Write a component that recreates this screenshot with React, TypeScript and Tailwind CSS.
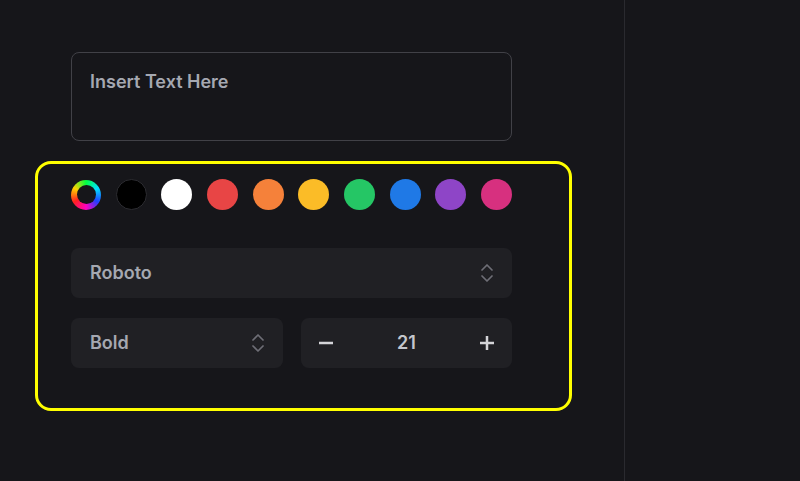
import { ChevronsUpDown } from "lucide-react";

const swatches = [
  "bg-black border border-[#2c2c31]",
  "bg-white",
  "bg-[#e84545]",
  "bg-[#f5813a]",
  "bg-[#fbbc27]",
  "bg-[#25c665]",
  "bg-[#1f79e6]",
  "bg-[#8e45c7]",
  "bg-[#d7307f]",
];

export default function App() {
  return (
    <div className="flex h-[481px] w-[800px] overflow-hidden bg-[#16161a] font-['Inter',sans-serif]">
      {/* editor panel */}
      <div className="w-[625px] shrink-0 border-r border-[#2a2a2f] pl-[71px] pt-[52px]">
        <div className="h-[89px] w-[441px] rounded-lg border border-[#414147] px-[18px] pt-[16px] text-lg leading-[26px] font-semibold text-[#a5a8b1]">
          Insert Text Here
        </div>

        <div className="-ml-[36px] mt-[20px] w-[537px] rounded-[16px] border-[3px] border-[#ffff00] pb-[40px] pl-[33px] pt-[15px]">
          {/* colours */}
          <div className="flex w-[441px] items-center justify-between">
            <div className="flex h-[30px] w-[30px] items-center justify-center rounded-full bg-[conic-gradient(#00ff40,#00e0ff,#2040ff,#ff00c0,#ff2020,#ffd000,#00ff40)]">
              <div className="h-[19px] w-[19px] rounded-full bg-[#16161a]" />
            </div>
            {swatches.map((c) => (
              <div key={c} className={`h-[31px] w-[31px] rounded-full ${c}`} />
            ))}
          </div>

          {/* font family */}
          <div className="mt-[38px] flex h-[50px] w-[441px] items-center justify-between rounded-lg bg-[#202024] pl-[19px] pr-[13px] text-lg font-semibold text-[#a5a8b1]">
            <span>Roboto</span>
            <ChevronsUpDown className="h-6 w-6 text-[#6e6e76]" strokeWidth={1.75} />
          </div>

          {/* weight + size */}
          <div className="mt-[20px] flex w-[441px] gap-[18px]">
            <div className="flex h-[50px] w-[212px] items-center justify-between rounded-lg bg-[#202024] pl-[19px] pr-[13px] text-lg font-semibold text-[#a5a8b1]">
              <span>Bold</span>
              <ChevronsUpDown className="h-6 w-6 text-[#6e6e76]" strokeWidth={1.75} />
            </div>
            <div className="flex h-[50px] flex-1 items-center justify-between rounded-lg bg-[#202024] px-[17px] text-lg font-semibold text-[#c4c6cc]">
              <svg width="16" height="16" viewBox="0 0 16 16" className="text-[#d4d4d8]">
                <path d="M1 8h14" stroke="currentColor" strokeWidth="2.5" />
              </svg>
              <span>21</span>
              <svg width="16" height="16" viewBox="0 0 16 16" className="text-[#d4d4d8]">
                <path d="M1 8h14M8 1v14" stroke="currentColor" strokeWidth="2.5" />
              </svg>
            </div>
          </div>
        </div>
      </div>

      {/* empty side panel */}
      <div className="flex-1" />
    </div>
  );
}
